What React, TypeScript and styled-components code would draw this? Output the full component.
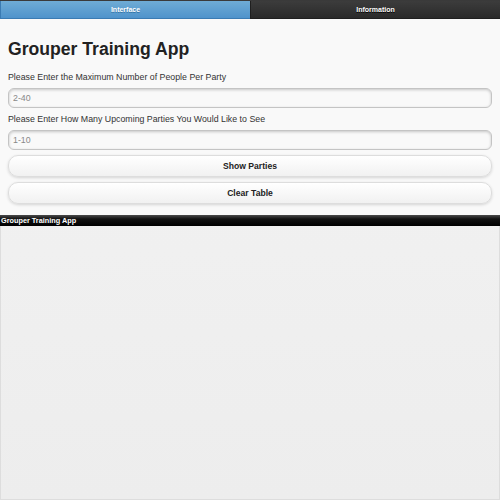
import React from "react";
import styled, { createGlobalStyle } from "styled-components";

const Global = createGlobalStyle`
  html, body { margin: 0; padding: 0; }
  body {
    width: 500px; height: 500px; overflow: hidden;
    font-family: "Liberation Sans", Arial, sans-serif;
    background: linear-gradient(#f3f3f3, #ededed);
  }
`;

const Page = styled.div`
  display: flex;
  flex-direction: column;
  width: 500px;
  height: 500px;
`;

const NavBar = styled.div`
  display: grid;
  grid-template-columns: 1fr 1fr;
  height: 19px;
  border-top: 1px solid #3a3a3a;
  box-sizing: border-box;
`;

const Tab = styled.div<{ $active?: boolean }>`
  display: flex;
  align-items: center;
  justify-content: center;
  font-size: 7px;
  font-weight: bold;
  color: #fff;
  text-shadow: 0 1px 0 ${(p) => (p.$active ? "#3373a5" : "#000")};
  background: ${(p) =>
    p.$active
      ? "linear-gradient(#6facd5, #4f93cc)"
      : "linear-gradient(#3c3c3c, #2a2a2a)"};
  border-bottom: 1px solid ${(p) => (p.$active ? "#3a7bb3" : "#1f1f1f")};
  border-left: 1px solid ${(p) => (p.$active ? "#3a7bb3" : "#1f1f1f")};
  box-sizing: border-box;
`;

const Content = styled.div`
  background: #f9f9f9;
  padding: 18px 8px 6px;
  display: flex;
  flex-direction: column;
`;

const Title = styled.h1`
  margin: 0 0 10px;
  font-size: 17.6px;
  font-weight: bold;
  color: #222;
  line-height: 24px;
`;

const Label = styled.label`
  font-size: 8.8px;
  color: #333;
  line-height: 12px;
  margin-bottom: 5px;
`;

const Input = styled.input`
  height: 20px;
  box-sizing: border-box;
  border: 1px solid #c4c4c4;
  border-radius: 6px;
  box-shadow: inset 0 1px 3px rgba(0, 0, 0, 0.2);
  background: #f9f9f9;
  padding: 0 4px;
  font-family: "Liberation Sans", Arial, sans-serif;
  font-size: 8.8px;
  color: #333;
  margin: 0 0 5px;
  outline: none;
  &::placeholder { color: #888; }
`;

const Button = styled.button`
  height: 22px;
  box-sizing: border-box;
  border: 1px solid #ddd;
  border-radius: 10px;
  background: linear-gradient(#fff, #f1f1f1);
  box-shadow: 0 1px 3px rgba(0, 0, 0, 0.15);
  font-family: "Liberation Sans", Arial, sans-serif;
  font-size: 8.6px;
  font-weight: bold;
  color: #222;
  margin: 0 0 5px;
  padding: 0;
`;

const Footer = styled.div`
  background: linear-gradient(#3c3c3c, #111 30%, #000);
  border-top: 1px solid #444;
  height: 11px;
  color: #fff;
  font-size: 7.3px;
  font-weight: bold;
  line-height: 10px;
  padding-left: 1px;
  box-sizing: border-box;
`;

const Rest = styled.div`
  flex: 1;
  border-left: 1px solid #ddd;
  border-right: 1px solid #ddd;
  border-bottom: 1px solid #ddd;
`;

export default function App() {
  return (
    <Page>
      <Global />
      <NavBar>
        <Tab $active>Interface</Tab>
        <Tab>Information</Tab>
      </NavBar>
      <Content>
        <Title>Grouper Training App</Title>
        <Label>Please Enter the Maximum Number of People Per Party</Label>
        <Input placeholder="2-40" />
        <Label>Please Enter How Many Upcoming Parties You Would Like to See</Label>
        <Input placeholder="1-10" />
        <Button>Show Parties</Button>
        <Button>Clear Table</Button>
      </Content>
      <Footer>Grouper Training App</Footer>
      <Rest />
    </Page>
  );
}
